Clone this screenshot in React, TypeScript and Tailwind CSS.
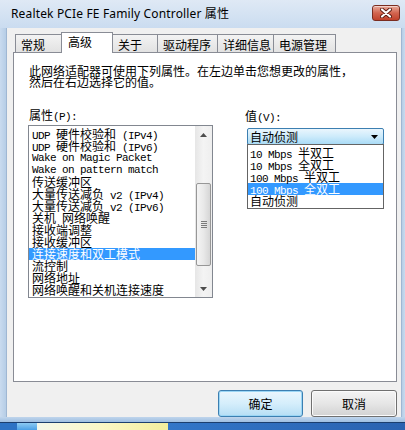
import React from "react";

const CJK_RE = /[\u3000-\u303f\u4e00-\u9fff\uff00-\uffef]+/g;

function Mixed({ text }: { text: string }) {
  const parts: React.ReactNode[] = [];
  const re = new RegExp(CJK_RE.source, "g");
  let last = 0;
  let k = 0;
  let m: RegExpExecArray | null;
  while ((m = re.exec(text))) {
    if (m.index > last)
      parts.push(
        <span key={k++} className="block font-['Liberation_Mono',monospace] text-[11px] tracking-[-0.6px] leading-[12px]">
          {text.slice(last, m.index)}
        </span>
      );
    parts.push(
      <span key={k++} className="block font-['Noto_Sans_CJK_SC',sans-serif] text-[12px] leading-[12px]">
        {m[0]}
      </span>
    );
    last = m.index + m[0].length;
  }
  if (last < text.length)
    parts.push(
      <span key={k++} className="block font-['Liberation_Mono',monospace] text-[11px] tracking-[-0.6px] leading-[12px]">
        {text.slice(last)}
      </span>
    );
  return <>{parts}</>;
}

const items = [
  "UDP 硬件校验和 (IPv4)",
  "UDP 硬件校验和 (IPv6)",
  "Wake on Magic Packet",
  "Wake on pattern match",
  "传送缓冲区",
  "大量传送减负 v2 (IPv4)",
  "大量传送减负 v2 (IPv6)",
  "关机 网络唤醒",
  "接收端调整",
  "接收缓冲区",
  "连接速度和双工模式",
  "流控制",
  "网络地址",
  "网络唤醒和关机连接速度",
];

const options = ["10 Mbps 半双工", "10 Mbps 全双工", "100 Mbps 半双工", "100 Mbps 全双工", "自动侦测"];

function Tab({ label, w, selected }: { label: string; w: string; selected?: boolean }) {
  if (selected) {
    return (
      <div
        className={`${w} h-[21px] -mb-px -ml-px relative z-10 bg-white border border-b-0 border-[#898c95] pl-[6px] pt-[1px] text-[12px] leading-[16px] text-black`}
      >
        {label}
      </div>
    );
  }
  return (
    <div
      className={`${w} h-[18px] -ml-px first:ml-0 bg-gradient-to-b from-[#f3f3f3] to-[#e2e2e2] border border-b-0 border-[#898c95] pl-[5px] pt-[1px] text-[12px] leading-[17px] text-black`}
    >
      {label}
    </div>
  );
}

function ArrowUp() {
  return (
    <svg width="7" height="4" viewBox="0 0 7 4">
      <path d="M0 4 L3.5 0 L7 4 Z" fill="#4d4d4d" />
    </svg>
  );
}
function ArrowDown({ color = "#4d4d4d" }: { color?: string }) {
  return (
    <svg width="7" height="4" viewBox="0 0 7 4">
      <path d="M0 0 L7 0 L3.5 4 Z" fill={color} />
    </svg>
  );
}

export default function App() {
  return (
    <div className="w-[405px] h-[430px] overflow-hidden flex flex-col bg-[#c4d8ee] font-['Noto_Sans_CJK_SC',sans-serif]">
      {/* title bar */}
      <div className="h-[28px] shrink-0 flex items-start bg-gradient-to-b from-[#dfe9f5] to-[#cadcf0] relative">
        <div className="pl-[11px] pt-[6px] text-[12px] leading-[16px] tracking-[0.15px] text-black font-['Noto_Sans','Noto_Sans_CJK_SC',sans-serif]">
          Realtek PCIe FE Family Controller 属性
        </div>
        <div className="absolute left-[372px] top-[5px] w-[28px] h-[16px] rounded-[3px] border border-[#7a2c20] bg-gradient-to-b from-[#e8aa9b] via-[#d2644f] to-[#c0412b] flex items-center justify-center shadow-[inset_0_1px_0_rgba(255,255,255,0.5)]">
          <svg width="12" height="10" viewBox="0 0 12 10">
            <path d="M2 1.5 L10 8.5 M10 1.5 L2 8.5" stroke="#5a1b12" strokeWidth="4" strokeLinecap="round" />
            <path d="M2 1.5 L10 8.5 M10 1.5 L2 8.5" stroke="#ffffff" strokeWidth="2.2" strokeLinecap="round" />
          </svg>
        </div>
      </div>

      {/* client + frame */}
      <div className="flex h-[389px] shrink-0">
        <div className="w-[7px] shrink-0 bg-gradient-to-r from-[#c9dbef] to-[#b6cde6] border-r border-[#9fb7d3]" />
        <div className="w-[394px] shrink-0 bg-[#f0f0f0] flex flex-col pl-[6px] pt-[3px]">
          {/* tabs */}
          <div className="flex items-end h-[21px] pl-[2px]">
            <Tab label="常规" w="w-[47px]" />
            <Tab label="高级" w="w-[52px]" selected />
            <Tab label="关于" w="w-[46px]" />
            <Tab label="驱动程序" w="w-[61px]" />
            <Tab label="详细信息" w="w-[57px]" />
            <Tab label="电源管理" w="w-[63px]" />
          </div>
          {/* panel */}
          <div className="w-[384px] h-[330px] bg-white border border-[#898c95] flex flex-col pt-[12px] pl-[15px]">
            <div className="text-[12px] leading-[11px] text-black">
              <div>此网络适配器可使用下列属性。在左边单击您想更改的属性，</div>
              <div>然后在右边选择它的值。</div>
            </div>
            <div className="flex mt-[22px]">
              {/* left column */}
              <div className="flex flex-col w-[185px] -ml-px">
                <div className="pl-[1px] h-[12px] flex items-baseline text-black whitespace-pre">
                  <span className="block text-[12px] leading-[12px]">属性</span>
                  <span className="block font-['Liberation_Mono',monospace] text-[11px] tracking-[-0.6px] leading-[12px]">(P):</span>
                </div>
                <div className="mt-[4px] w-[185px] h-[173px] border border-[#828790] flex">
                  <div className="flex-1 pt-[2px] overflow-hidden">
                    {items.map((it, i) => (
                      <div
                        key={i}
                        className={`h-[12px] flex items-baseline pl-[3px] whitespace-pre ${
                          i === 10 ? "bg-[#3399ff] text-white" : "text-black"
                        }`}
                      >
                        <Mixed text={it} />
                      </div>
                    ))}
                  </div>
                  <div className="w-[17px] flex flex-col bg-gradient-to-r from-[#e6e6e6] via-[#f4f4f4] to-[#eeeeee]">
                    <div className="h-[17px] flex items-center justify-center">
                      <ArrowUp />
                    </div>
                    <div className="h-[40px]" />
                    <div className="h-[83px] mx-[1px] rounded-[2px] border border-[#979797] bg-gradient-to-r from-[#f4f4f4] via-[#e9e9e9] to-[#d6d6d6] flex flex-col items-center justify-center gap-[1px]">
                      <div className="w-[6px] h-[1px] bg-[#7b7b7b]" />
                      <div className="w-[6px] h-[1px] bg-[#7b7b7b]" />
                      <div className="w-[6px] h-[1px] bg-[#7b7b7b]" />
                      <div className="w-[6px] h-[1px] bg-[#7b7b7b]" />
                    </div>
                    <div className="flex-1" />
                    <div className="h-[17px] flex items-center justify-center">
                      <ArrowDown />
                    </div>
                  </div>
                </div>
              </div>
              {/* right column */}
              <div className="flex flex-col ml-[32px] mt-[1px]">
                <div className="h-[12px] flex items-baseline text-black whitespace-pre">
                  <span className="block text-[12px] leading-[12px]">值</span>
                  <span className="block font-['Liberation_Mono',monospace] text-[11px] tracking-[-0.6px] leading-[12px]">(V):</span>
                </div>
                <div className="relative ml-[2px] mt-[6px] w-[137px]">
                  <div className="h-[17px] border border-[#3c7fb1] rounded-[2px] bg-gradient-to-b from-[#eaf6fd] via-[#cdebfb] to-[#a9dbf6] flex items-center pl-[2px] pr-[5px]">
                    <span className="flex-1 text-[12px] leading-[14px] text-black">自动侦测</span>
                    <ArrowDown color="#000000" />
                  </div>
                  <div className="absolute left-0 top-[16px] w-[137px] bg-white border border-[#646464] pt-[2px] pb-[1px] z-20">
                    {options.map((o, i) => (
                      <div
                        key={i}
                        className={`h-[12px] flex items-baseline pl-[2px] whitespace-pre ${
                          i === 3 ? "bg-[#3399ff] text-white" : "text-black"
                        }`}
                      >
                        <Mixed text={o} />
                      </div>
                    ))}
                  </div>
                </div>
              </div>
            </div>
          </div>
          {/* buttons */}
          <div className="flex justify-end gap-[8px] mt-[8px] pr-[4px]">
            <div className="w-[85px] h-[27px] rounded-[3px] border border-[#3c7fb1] bg-gradient-to-b from-[#eaf6fd] via-[#d5eefb] to-[#b6def5] shadow-[inset_0_0_0_1px_#9bd6f5] flex items-center justify-center text-[12px] text-black">
              确定
            </div>
            <div className="w-[86px] h-[27px] rounded-[3px] border border-[#707070] bg-gradient-to-b from-[#f4f4f4] via-[#e6e6e6] to-[#d2d2d2] shadow-[inset_0_0_0_1px_#fbfbfb] flex items-center justify-center text-[12px] text-black">
              取消
            </div>
          </div>
        </div>
        <div className="flex-1 bg-gradient-to-r from-[#b6cde6] to-[#c9dbef] border-l border-[#9fb7d3]" />
      </div>

      {/* bottom frame */}
      <div className="h-[5px] shrink-0 bg-gradient-to-b from-[#c0d5ec] to-[#9ebfe2]" />
      {/* taskbar */}
      <div className="flex-1 flex border-t border-[#1b3e6e] bg-[#2a68b4]">
        <div className="w-[17px] bg-[#2d72c4]" />
        <div className="w-[20px] bg-gradient-to-b from-[#8ccaf2] to-[#4aa0e6]" />
        <div className="w-[131px] bg-gradient-to-r from-[#f4f7ea] via-[#fbf7c5] to-[#f2ee9c]" />
        <div className="flex-1 bg-gradient-to-r from-[#3276c8] to-[#2a62b0]" />
      </div>
    </div>
  );
}
